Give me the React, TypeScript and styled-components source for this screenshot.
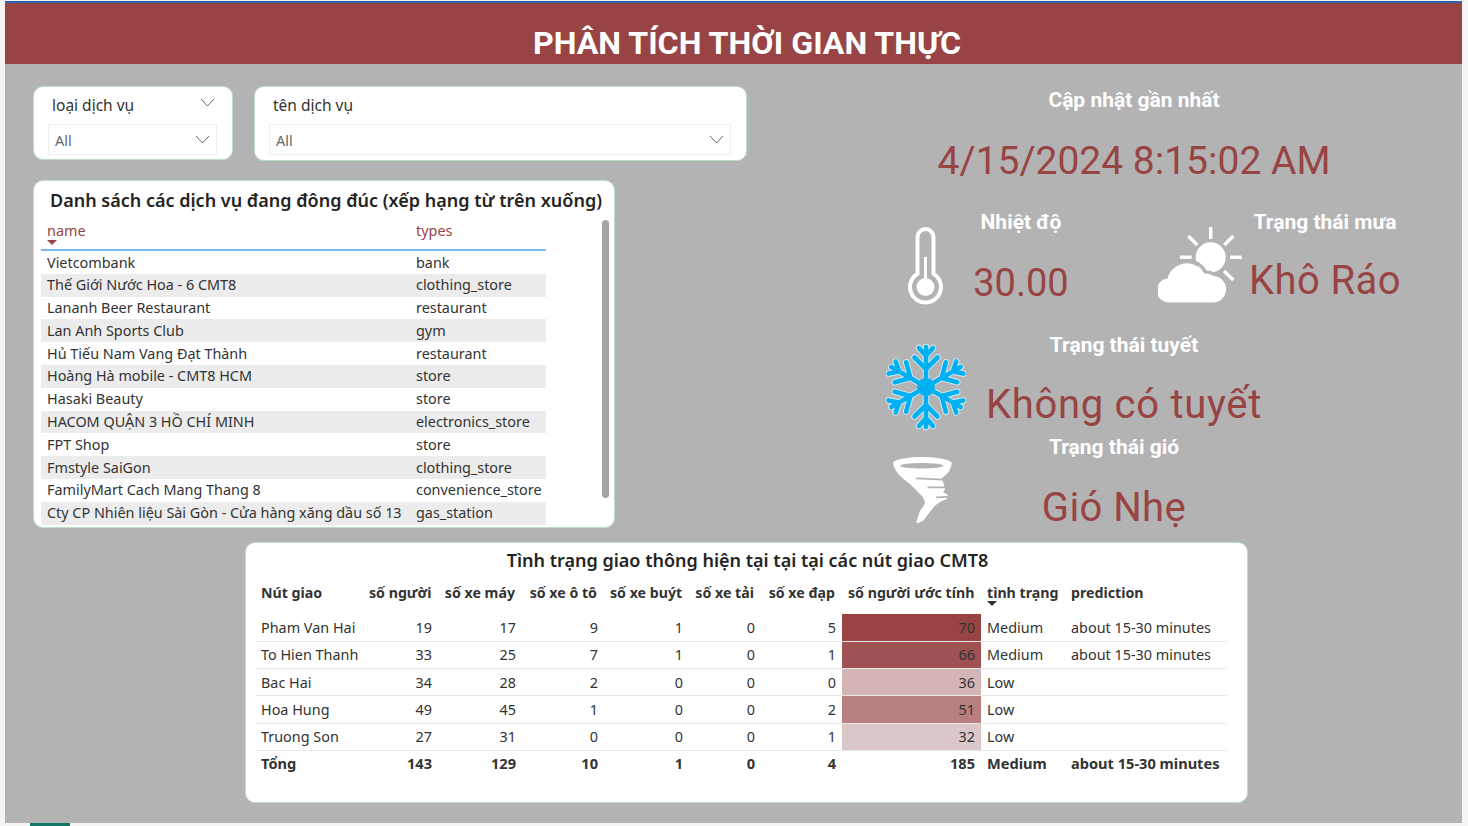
import React from "react"
import styled, { createGlobalStyle } from "styled-components"

const maroon = "#994444"
const panelGrey = "#b3b3b3"
const uiFont = `"Noto Sans", "Open Sans", sans-serif`
const dinFont = `Roboto, "Liberation Sans", sans-serif`

const services = [
  ["Vietcombank", "bank"],
  ["Thế Giới Nước Hoa - 6 CMT8", "clothing_store"],
  ["Lananh Beer Restaurant", "restaurant"],
  ["Lan Anh Sports Club", "gym"],
  ["Hủ Tiếu Nam Vang Đạt Thành", "restaurant"],
  ["Hoàng Hà mobile - CMT8 HCM", "store"],
  ["Hasaki Beauty", "store"],
  ["HACOM QUẬN 3 HỒ CHÍ MINH", "electronics_store"],
  ["FPT Shop", "store"],
  ["Fmstyle SaiGon", "clothing_store"],
  ["FamilyMart Cach Mang Thang 8", "convenience_store"],
  ["Cty CP Nhiên liệu Sài Gòn - Cửa hàng xăng dầu số 13", "gas_station"],
]

const junctions = [
  { name: "Pham Van Hai", people: 19, bikes: 17, cars: 9, buses: 1, trucks: 0, cycles: 5, est: 70, heat: "#994444", status: "Medium", prediction: "about 15-30 minutes" },
  { name: "To Hien Thanh", people: 33, bikes: 25, cars: 7, buses: 1, trucks: 0, cycles: 1, est: 66, heat: "#a05153", status: "Medium", prediction: "about 15-30 minutes" },
  { name: "Bac Hai", people: 34, bikes: 28, cars: 2, buses: 0, trucks: 0, cycles: 0, est: 36, heat: "#d3b5b6", status: "Low", prediction: "" },
  { name: "Hoa Hung", people: 49, bikes: 45, cars: 1, buses: 0, trucks: 0, cycles: 2, est: 51, heat: "#b77f7f", status: "Low", prediction: "" },
  { name: "Truong Son", people: 27, bikes: 31, cars: 0, buses: 0, trucks: 0, cycles: 1, est: 32, heat: "#dcc7c8", status: "Low", prediction: "" },
]

const GlobalStyle = createGlobalStyle`
  html, body {
    margin: 0;
    width: 1468px;
    height: 826px;
    overflow: hidden;
    background: #f4f4f4;
    font-family: ${uiFont};
  }
  * { box-sizing: border-box; }
`

const Chevron = ({ className }: { className?: string }) => (
  <svg className={className} width="15" height="9" viewBox="0 0 15 9" fill="none">
    <path d="M1 1l6.5 7L14 1" stroke="#666" strokeWidth="1" />
  </svg>
)

const Thermometer = () => (
  <ThermoSvg viewBox="0 0 36 78" fill="none">
    <path d="M9.5 46.7V10a8 8 0 0 1 16 0v36.7A15.5 15.5 0 1 1 9.5 46.7Z" stroke="#fff" strokeWidth="4" />
    <path d="M17.5 30v24" stroke="#fff" strokeWidth="3" />
    <circle cx="17.5" cy="60" r="9" fill="#fff" />
  </ThermoSvg>
)

const CloudSun = () => (
  <CloudSvg viewBox="0 0 84 76" fill="none">
    <circle cx="52.7" cy="30.3" r="15" fill="#fff" />
    <g stroke="#fff" strokeWidth="3.4">
      <path d="M52.7 0v12M22 30.3h11.7M72 30.3h11.7M30.3 9l9 9M75.3 9l-9 9M66 44l9.3 9" />
    </g>
    <path
      d="M12 75.5A12 12 0 0 1 9.5 51.5 A20 20 0 0 1 46 46 A13 13 0 0 1 56 49 A13.3 13.3 0 0 1 56 75.5Z"
      fill="#fff"
    />
    <path d="M33 34 A20 20 0 0 1 47.5 45 A13 13 0 0 1 57 48" stroke={panelGrey} strokeWidth="3" />
  </CloudSvg>
)

const flakeArm = "M0 0V-40M0-18l-11.5-11.5M0-18l11.5-11.5M0-31l-7-8M0-31l7-8"

const Snowflake = () => (
  <FlakeSvg viewBox="-40 -44 80 88" fill="none">
    {[0, 60, 120, 180, 240, 300].map((a) => (
      <path key={"o" + a} d={flakeArm} transform={`rotate(${a})`} stroke="#d6eef9" strokeWidth="6.4" strokeLinecap="round" />
    ))}
    {[0, 60, 120, 180, 240, 300].map((a) => (
      <path key={"i" + a} d={flakeArm} transform={`rotate(${a})`} stroke="#00b0f0" strokeWidth="4.6" strokeLinecap="round" />
    ))}
    <polygon points="0,-10 8.7,-5 8.7,5 0,10 -8.7,5 -8.7,-5" fill="#00b0f0" />
  </FlakeSvg>
)

const Tornado = () => (
  <TornadoSvg viewBox="0 0 64 68" fill="none">
    <path
      d="M1.3 5C6 1.5 18 0 29.7 0 42 0 55 1.5 59.7 5.3V7C59 11 57 15 54.7 17L49.7 21.3 52.3 28.7 53 32.7 51 35 55.7 38 54.7 42C50 44 46 46 43 48.7 40 52 38 55 36.3 57L31.3 63.7 26.3 66C24.5 66 24 65 24.7 63.7 26 60 27 57 28 53.7 30 51 33 48 33 45.3 32 42 31 40 29.7 38.7L18 27C13 23 9 20 6.3 17 3.5 13 1.5 10 1.3 7Z"
      fill="#fff"
    />
    <ellipse cx="29.7" cy="8.7" rx="21.7" ry="2.8" fill={panelGrey} />
    <path d="M24.7 21.4L56 22.8M36.3 30.4H58M44.7 40.4L59 39.6" stroke={panelGrey} strokeWidth="1.7" strokeLinecap="round" />
  </TornadoSvg>
)

export default function App() {
  const numeric = ["people", "bikes", "cars", "buses", "trucks", "cycles"] as const
  return (
    <>
      <GlobalStyle />
      <Canvas>
        <Banner>PHÂN TÍCH THỜI GIAN THỰC</Banner>
        <Content>
          <LeftColumn>
            <Filters>
              <Slicer $width={200} $height={74}>
                <SlicerHead>
                  <span>loại dịch vụ</span>
                  <Chevron />
                </SlicerHead>
                <SlicerBox>
                  <span>All</span>
                  <Chevron />
                </SlicerBox>
              </Slicer>
              <Slicer $width={493} $height={75}>
                <SlicerHead>
                  <span>tên dịch vụ</span>
                </SlicerHead>
                <SlicerBox>
                  <span>All</span>
                  <Chevron />
                </SlicerBox>
              </Slicer>
            </Filters>
            <ListCard>
              <ListTitle>Danh sách các dịch vụ đang đông đúc (xếp hạng từ trên xuống)</ListTitle>
              <ListBody>
                <ListTable>
                  <thead>
                    <tr>
                      <ListHead>
                        name
                        <SortCaret $color={maroon} />
                      </ListHead>
                      <ListHead>types</ListHead>
                    </tr>
                  </thead>
                  <tbody>
                    {services.map(([name, type]) => (
                      <ListRow key={name}>
                        <ListCell>{name}</ListCell>
                        <ListCell>{type}</ListCell>
                      </ListRow>
                    ))}
                  </tbody>
                </ListTable>
                <ScrollThumb />
              </ListBody>
            </ListCard>
          </LeftColumn>

          <Weather>
            <WeatherHeading>
              <MetricTitle>Cập nhật gần nhất</MetricTitle>
              <DateValue>4/15/2024 8:15:02 AM</DateValue>
            </WeatherHeading>
            <WeatherRow $height={123}>
              <Thermometer />
              <Metric $width={154}>
                <MetricTitle>Nhiệt độ</MetricTitle>
                <MetricValue $size={38} $spacing={0} $gap={22}>30.00</MetricValue>
              </Metric>
              <CloudSun />
              <Metric $width={166}>
                <MetricTitle>Trạng thái mưa</MetricTitle>
                <MetricValue $size={40} $spacing={0.4} $gap={20}>Khô Ráo</MetricValue>
              </Metric>
            </WeatherRow>
            <WeatherRow $height={102}>
              <Snowflake />
              <Metric $width={316}>
                <MetricTitle>Trạng thái tuyết</MetricTitle>
                <MetricValue $size={40} $spacing={0.7} $gap={21}>Không có tuyết</MetricValue>
              </Metric>
            </WeatherRow>
            <WeatherRow $height={95}>
              <Tornado />
              <Metric $width={316}>
                <MetricTitle>Trạng thái gió</MetricTitle>
                <MetricValue $size={40} $spacing={0.4} $gap={22}>Gió Nhẹ</MetricValue>
              </Metric>
            </WeatherRow>
          </Weather>
        </Content>

        <TrafficCard>
          <TrafficTitle>Tình trạng giao thông hiện tại tại tại các nút giao CMT8</TrafficTitle>
          <TrafficTable>
            <colgroup>
              {[108, 75, 84, 82, 85, 72, 81, 139, 84, 162].map((w, i) => (
                <col key={i} width={w} />
              ))}
            </colgroup>
            <thead>
              <tr>
                <HeadCell $left>Nút giao</HeadCell>
                <HeadCell>số người</HeadCell>
                <HeadCell>số xe máy</HeadCell>
                <HeadCell>số xe ô tô</HeadCell>
                <HeadCell>số xe buýt</HeadCell>
                <HeadCell>số xe tải</HeadCell>
                <HeadCell>số xe đạp</HeadCell>
                <HeadCell>số người ước tính</HeadCell>
                <HeadCell $left>
                  tình trạng
                  <SortCaret $color="#333" />
                </HeadCell>
                <HeadCell $left>prediction</HeadCell>
              </tr>
            </thead>
            <tbody>
              {junctions.map((j) => (
                <BodyRow key={j.name}>
                  <BodyCell $left>{j.name}</BodyCell>
                  {numeric.map((k) => (
                    <BodyCell key={k}>{j[k]}</BodyCell>
                  ))}
                  <BodyCell style={{ background: j.heat }}>{j.est}</BodyCell>
                  <BodyCell $left>{j.status}</BodyCell>
                  <BodyCell $left>{j.prediction}</BodyCell>
                </BodyRow>
              ))}
              <TotalRow>
                <TotalCell $left>Tổng</TotalCell>
                <TotalCell>143</TotalCell>
                <TotalCell>129</TotalCell>
                <TotalCell>10</TotalCell>
                <TotalCell>1</TotalCell>
                <TotalCell>0</TotalCell>
                <TotalCell>4</TotalCell>
                <TotalCell>185</TotalCell>
                <TotalCell $left>Medium</TotalCell>
                <TotalCell $left>about 15-30 minutes</TotalCell>
              </TotalRow>
            </tbody>
          </TrafficTable>
        </TrafficCard>
      </Canvas>
      <PageTabs>
        <ActiveTab />
      </PageTabs>
    </>
  )
}

const Canvas = styled.div`
  width: 1457px;
  height: 822px;
  margin: 1px 0 0 5px;
  border-top: 2px solid #2a66ad;
  background: ${panelGrey};
`

const Banner = styled.div`
  height: 61px;
  padding: 21px 0 0 27px;
  background: ${maroon};
  color: #fff;
  font: 700 32.2px/38px ${dinFont};
  text-align: center;
`

const Content = styled.div`
  display: flex;
  padding: 22px 0 0 28px;
`

const LeftColumn = styled.div`
  width: 714px;
  height: 442px;
`

const Filters = styled.div`
  display: flex;
  gap: 21px;
  align-items: flex-start;
  margin-bottom: 19px;
`

const Card = styled.div`
  background: #fff;
  border: 1px solid #b9e0c4;
  border-radius: 10px;
`

const Slicer = styled(Card)<{ $width: number; $height: number }>`
  width: ${(p) => p.$width}px;
  height: ${(p) => p.$height}px;
  padding: 0 15px 0 14px;
  flex: none;
`

const SlicerHead = styled.div`
  display: flex;
  justify-content: space-between;
  align-items: center;
  height: 37px;
  padding: 0 2px 2px 4px;
  font-size: 15.5px;
  color: #333;

  svg {
    margin-bottom: 4px;
  }
`

const SlicerBox = styled.div`
  display: flex;
  justify-content: space-between;
  align-items: center;
  height: 31px;
  padding: 0 6px 0 6px;
  border: 1px solid #eeeeee;
  font-size: 14.5px;
  color: #666;
`

const ListCard = styled(Card)`
  width: 582px;
  height: 348px;
  padding: 6px 0 0 7px;
`

const ListTitle = styled.div`
  padding-left: 9px;
  font-size: 18px;
  line-height: 26px;
  font-weight: 600;
  color: #252423;
  white-space: nowrap;
`

const ListBody = styled.div`
  position: relative;
  margin-top: 8px;
`

const ListTable = styled.table`
  width: 505px;
  border-collapse: collapse;
  table-layout: fixed;
  font-size: 14.4px;
  color: #333;
`

const SortCaret = styled.span<{ $color: string }>`
  position: absolute;
  left: 6px;
  bottom: 4px;
  width: 0;
  height: 0;
  border: 5px solid transparent;
  border-bottom: 0;
  border-top-color: ${(p) => p.$color};
`

const ListHead = styled.th`
  position: relative;
  height: 27px;
  padding: 0 0 9px 6px;
  border-bottom: 2px solid #7db8ee;
  color: ${maroon};
  font-weight: 400;
  text-align: left;

  &:first-child {
    width: 369px;
  }
`

const ListRow = styled.tr`
  height: 22.8px;

  &:first-child {
    height: 23.8px;
  }

  &:first-child td {
    padding-top: 1px;
  }

  &:nth-child(even) {
    background: #ececec;
  }
`

const ListCell = styled.td`
  padding: 0 0 0 6px;
  line-height: 20px;
  white-space: nowrap;
`

const ScrollThumb = styled.div`
  position: absolute;
  top: -1px;
  left: 561px;
  width: 7px;
  height: 278px;
  border-radius: 4px;
  background: #a6a6a6;
`

const Weather = styled.div`
  padding: 0 0 0 133px;
  width: 715px;
`

const WeatherHeading = styled.div`
  width: 508px;
  height: 122px;
  text-align: center;
`

const MetricTitle = styled.div`
  font: 700 21px/28px ${dinFont};
  color: #fff;
  white-space: nowrap;
`

const DateValue = styled.div`
  margin-top: 22px;
  font: 400 39px/50px ${dinFont};
  color: ${maroon};
  white-space: nowrap;
`

const WeatherRow = styled.div<{ $height: number }>`
  display: flex;
  align-items: flex-start;
  height: ${(p) => p.$height}px;
`

const Metric = styled.div<{ $width: number }>`
  flex: none;
  width: ${(p) => p.$width}px;
  text-align: center;
`

const MetricValue = styled.div<{ $size: number; $spacing: number; $gap: number }>`
  margin-top: ${(p) => p.$gap}px;
  font: 400 ${(p) => p.$size}px/50px ${dinFont};
  letter-spacing: ${(p) => p.$spacing}px;
  color: ${maroon};
  white-space: nowrap;
`

const ThermoSvg = styled.svg`
  flex: none;
  width: 36px;
  height: 78px;
  margin: 19px 0 0 28px;
`

const CloudSvg = styled.svg`
  flex: none;
  width: 84px;
  height: 76px;
  margin: 19px 0 0 60px;
`

const FlakeSvg = styled.svg`
  flex: none;
  width: 80px;
  height: 88px;
  margin: 12px 0 0 6px;
`

const TornadoSvg = styled.svg`
  flex: none;
  width: 64px;
  height: 68px;
  margin: 24px 0 0 12px;
`

const TrafficCard = styled(Card)`
  width: 1003px;
  height: 261px;
  margin: 14px 0 0 240px;
  padding: 3px 20px 0 9px;
`

const TrafficTitle = styled.div`
  margin-left: 13px;
  font-size: 18px;
  line-height: 28px;
  font-weight: 600;
  color: #252423;
  text-align: center;
`

const TrafficTable = styled.table`
  width: 972px;
  margin-top: 5px;
  border-collapse: collapse;
  table-layout: fixed;
  font-size: 14.4px;
  color: #333;
`

const HeadCell = styled.th<{ $left?: boolean }>`
  position: relative;
  height: 35px;
  padding: 0 7px 9px 6px;
  font-size: 14.2px;
  font-weight: 700;
  text-align: ${(p) => (p.$left ? "left" : "right")};
  white-space: nowrap;

  ${SortCaret} {
    bottom: 8px;
  }
`

const BodyRow = styled.tr`
  height: 27.3px;
  border-bottom: 1px solid #e8e8e8;

  &:last-of-type {
    border-bottom: 0;
  }
`

const BodyCell = styled.td<{ $left?: boolean }>`
  padding: 0 6px;
  text-align: ${(p) => (p.$left ? "left" : "right")};
  white-space: nowrap;
`

const TotalRow = styled.tr`
  height: 27px;
`

const TotalCell = styled(BodyCell)`
  padding-bottom: 2px;
  font-weight: 700;
  font-size: 14.6px;
`

const PageTabs = styled.div`
  height: 3px;
  padding-left: 30px;
  overflow: hidden;
`

const ActiveTab = styled.div`
  width: 40px;
  height: 3px;
  background: #117865;
`
